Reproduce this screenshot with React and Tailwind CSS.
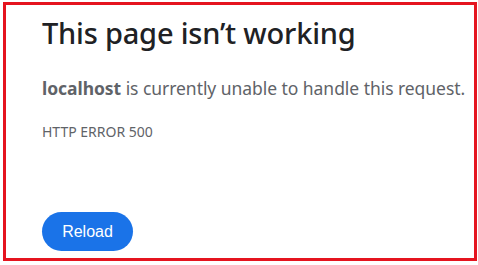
export default function App() {
  const font = { fontFamily: '"Noto Sans", "Open Sans", sans-serif' };
  return (
    <div className="w-[478px] h-[265px] bg-white pl-[3px] pt-[2px]">
      <div className="w-[474px] h-[259px] border-[3px] border-[#e5141f] pl-[36px] flex flex-col">
        <h1 className="mt-[10px] text-[29px] leading-[36px] font-medium text-[#202124] tracking-[-0.2px]" style={font}>
          This page isn’t working
        </h1>
        <p className="mt-[25px] text-[17.5px] leading-[24px] text-[#5f6368] whitespace-nowrap tracking-[-0.05px]" style={font}>
          <span className="font-bold">localhost</span> is currently unable to handle this request.
        </p>
        <div className="mt-[23px] text-[14px] leading-[18px] text-[#5f6368]" style={font}>
          HTTP ERROR 500
        </div>
        <div className="mt-auto mb-[7px]">
          <button className="h-[39px] w-[91px] rounded-full bg-[#1a73e8] text-white text-[16px]" style={{ fontFamily: '"Liberation Sans", Arial, sans-serif' }}>
            Reload
          </button>
        </div>
      </div>
    </div>
  );
}
